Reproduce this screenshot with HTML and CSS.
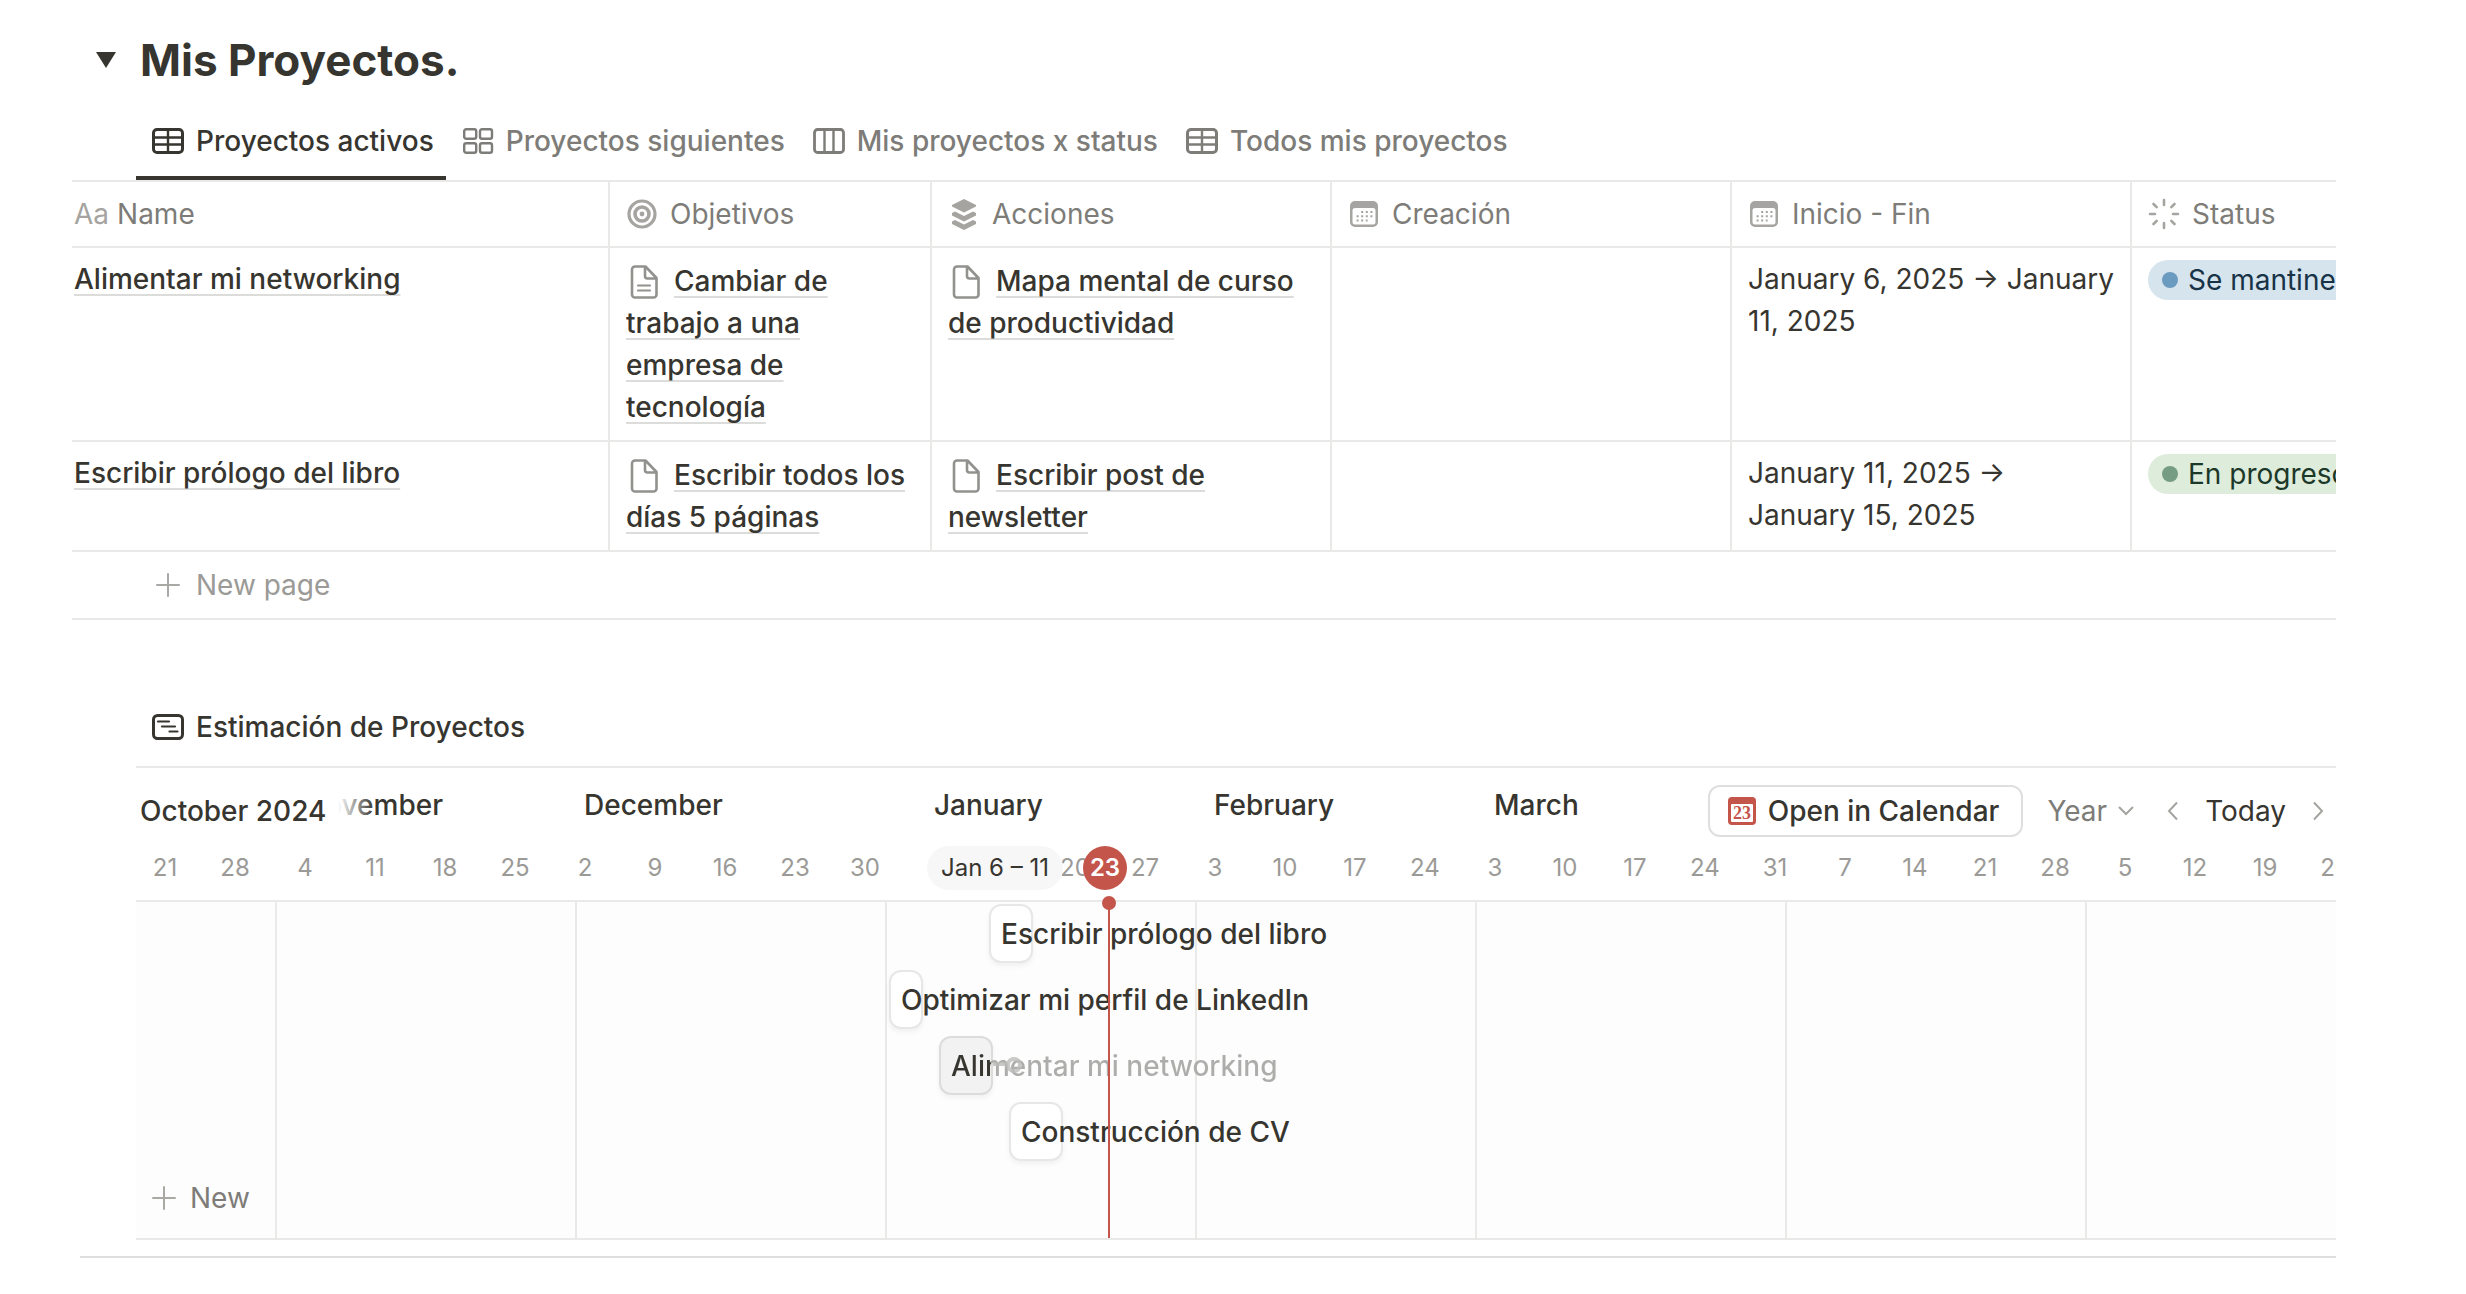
FILE: index.html
```html
<!DOCTYPE html>
<html lang="es">
<head>
<meta charset="utf-8">
<meta name="viewport" content="width=device-width, initial-scale=1">
<title>Mis Proyectos</title>
<link rel="stylesheet" href="styles.css">
</head>
<body>
<svg class="sprite" aria-hidden="true">
  <symbol id="i-table" viewBox="0 0 32 26"><path fill="none" stroke="currentColor" stroke-width="3" d="M5 1.5h22a3.5 3.5 0 0 1 3.5 3.5v16a3.5 3.5 0 0 1-3.500 3.500H5A3.500 3.500 0 0 1 1.500 21V5A3.500 3.500 0 0 1 5 1.500z"/><path fill="none" stroke="currentColor" stroke-width="2.400" d="M2 9.500h28M2 16.500h28M16 2v22"/></symbol>
  <symbol id="i-gallery" viewBox="0 0 32 26"><g fill="none" stroke="currentColor" stroke-width="2.400"><rect x="2.200" y="1.200" width="12" height="9.600" rx="2"/><rect x="18" y="1.200" width="12" height="9.600" rx="2"/><rect x="2.200" y="15.200" width="12" height="9.600" rx="2"/><rect x="18" y="15.200" width="12" height="9.600" rx="2"/></g></symbol>
  <symbol id="i-board" viewBox="0 0 32 26"><rect x="1.500" y="1.500" width="29" height="23" rx="3" fill="none" stroke="currentColor" stroke-width="2.800"/><path stroke="currentColor" stroke-width="2.400" d="M11.500 2v22M20.500 2v22"/></symbol>
  <symbol id="i-timeline" viewBox="0 0 32 26"><rect x="1.500" y="1.500" width="29" height="23" rx="4" fill="none" stroke="currentColor" stroke-width="3"/><path stroke="currentColor" stroke-width="2.200" stroke-linecap="round" d="M6 7.500h11M10 12.500h13M17.500 17.500h8"/></symbol>
  <symbol id="i-target" viewBox="0 0 30 30"><g fill="none" stroke="currentColor"><circle cx="15" cy="15" r="13" stroke-width="3.200"/><circle cx="15" cy="15" r="7" stroke-width="3.600"/></g><circle cx="15" cy="15" r="2.400" fill="currentColor"/></symbol>
  <symbol id="i-layers" viewBox="0 0 26 32"><g fill="currentColor"><path d="M13 1L25 7v1.500L13 14.500 1 8.500V7z"/><path d="M1 15l3-1.500 9 4.500 9-4.500 3 1.500v2.500l-12 6-12-6z"/><path d="M1 23.500l3-1.500 9 4.500 9-4.500 3 1.500v2.500l-12 6-12-6z"/></g></symbol>
  <symbol id="i-date" viewBox="0 0 28 26"><path fill="currentColor" fill-rule="evenodd" d="M5 0h18a5 5 0 0 1 5 5v16a5 5 0 0 1-5 5H5a5 5 0 0 1-5-5V5a5 5 0 0 1 5-5zM2.500 9.500V21A2.500 2.500 0 0 0 5 23.500h18a2.500 2.500 0 0 0 2.500-2.500V9.500A2.500 2.500 0 0 0 23 7H5a2.500 2.500 0 0 0-2.500 2.500z"/><path stroke="currentColor" stroke-width="2" stroke-dasharray="2 2.600" d="M11.200 11h12M6.600 15.200h16M6.600 19.400h11"/></symbol>
  <symbol id="i-status" viewBox="0 0 32 32"><path stroke="currentColor" stroke-width="2.600" stroke-linecap="round" d="M16 2v5M16 25v5M2 16h5M25 16h5M5.500 6l3.200 3.200M26.500 6l-3.200 3.200M5.500 26l3.200-3.200M26.500 26l-3.200-3.200"/></symbol>
  <symbol id="i-page" viewBox="0 0 28 34"><path fill="none" stroke="currentColor" stroke-width="2.600" stroke-linejoin="round" d="M5 1.500h10.500L26.500 13v16.500a3 3 0 0 1-3 3H5a3 3 0 0 1-3-3v-25a3 3 0 0 1 3-3zM15 2v9a2.500 2.500 0 0 0 2.500 2.500H26"/></symbol>
  <symbol id="i-page-text" viewBox="0 0 28 34"><use href="#i-page"/><path stroke="currentColor" stroke-width="2.200" stroke-linecap="round" d="M8 20.500h12M8 25.500h12"/></symbol>
  <symbol id="i-plus" viewBox="0 0 24 24"><path stroke="currentColor" stroke-width="2" stroke-linecap="round" d="M12 1v22M1 12h22"/></symbol>
</svg>

<main class="page">
  <h1 class="title">
    <button class="toggle" aria-label="Contraer"><svg viewBox="0 0 20 16"><path fill="currentColor" d="M0 0h20L10 16z"/></svg></button>
    Mis Proyectos.
  </h1>

  <nav class="tabs">
    <button class="tab active"><svg><use href="#i-table"/></svg>Proyectos activos</button>
    <button class="tab"><svg><use href="#i-gallery"/></svg>Proyectos siguientes</button>
    <button class="tab"><svg><use href="#i-board"/></svg>Mis proyectos x status</button>
    <button class="tab"><svg><use href="#i-table"/></svg>Todos mis proyectos</button>
  </nav>

  <section class="database">
    <table class="grid">
      <colgroup><col class="c-name"><col class="c-goal"><col class="c-wide"><col class="c-wide"><col class="c-wide"><col class="c-wide"></colgroup>
      <thead>
        <tr>
          <th><span class="head name"><span class="aa">Aa</span>Name</span></th>
          <th><span class="head"><svg class="ic-target"><use href="#i-target"/></svg>Objetivos</span></th>
          <th><span class="head"><svg class="ic-layers"><use href="#i-layers"/></svg>Acciones</span></th>
          <th><span class="head"><svg class="ic-date"><use href="#i-date"/></svg>Creación</span></th>
          <th><span class="head"><svg class="ic-date"><use href="#i-date"/></svg>Inicio - Fin</span></th>
          <th><span class="head"><svg class="ic-status"><use href="#i-status"/></svg>Status</span></th>
        </tr>
      </thead>
      <tbody>
        <tr>
          <td><a class="link" href="#">Alimentar mi networking</a></td>
          <td class="relation"><svg class="ic-page"><use href="#i-page-text"/></svg><a class="link" href="#">Cambiar de trabajo a una empresa de tecnología</a></td>
          <td class="relation"><svg class="ic-page"><use href="#i-page"/></svg><a class="link" href="#">Mapa mental de curso de productividad</a></td>
          <td></td>
          <td class="dates">January 6, 2025 → January 11, 2025</td>
          <td class="status"><span class="pill blue">Se mantinene</span></td>
        </tr>
        <tr>
          <td><a class="link" href="#">Escribir prólogo del libro</a></td>
          <td class="relation"><svg class="ic-page"><use href="#i-page"/></svg><a class="link" href="#">Escribir todos los días 5 páginas</a></td>
          <td class="relation"><svg class="ic-page"><use href="#i-page"/></svg><a class="link" href="#">Escribir post de newsletter</a></td>
          <td></td>
          <td class="dates">January 11, 2025 → <span class="keep">January 15, 2025</span></td>
          <td class="status"><span class="pill green">En progreso</span></td>
        </tr>
      </tbody>
    </table>
    <button class="new-page"><svg class="ic-plus"><use href="#i-plus"/></svg>New page</button>
  </section>

  <section class="estimate">
    <h2 class="view-name"><svg><use href="#i-timeline"/></svg>Estimación de Proyectos</h2>
    <div class="timeline">
      <header class="scale">
        <div class="months">
          <span class="w-lead"></span>
          <span class="w4">November</span>
          <span class="w5">December</span>
          <span class="w4">January</span>
          <span class="w4">February</span>
          <span class="w5">March</span>
        </div>
        <div class="sticky-month">October 2024</div>
        <div class="controls">
          <button class="open"><svg viewBox="0 0 28 28"><rect width="28" height="28" rx="4" fill="#c4554a"/><rect x="3" y="7" width="22" height="18" rx="1" fill="#fff"/><text x="14" y="22" text-anchor="middle" class="cal-num">23</text></svg>Open in Calendar</button>
          <button class="year">Year<svg viewBox="0 0 18 12"><path d="M2 2l7 7 7-7"/></svg></button>
          <button class="arrow" aria-label="Anterior"><svg viewBox="0 0 12 20"><path d="M10 1.500L2 10l8 8.500"/></svg></button>
          <button class="today">Today</button>
          <button class="arrow" aria-label="Siguiente"><svg viewBox="0 0 12 20"><path d="M2 1.500L10 10l-8 8.500"/></svg></button>
        </div>
        <div class="weeks">
          <span>21</span><span>28</span><span>4</span><span>11</span><span>18</span><span>25</span><span>2</span><span>9</span><span>16</span><span>23</span><span>30</span><span></span><span></span><span>20</span><span>27</span><span>3</span><span>10</span><span>17</span><span>24</span><span>3</span><span>10</span><span>17</span><span>24</span><span>31</span><span>7</span><span>14</span><span>21</span><span>28</span><span>5</span><span>12</span><span>19</span><span>26</span>
          <span class="range">Jan 6 – 11</span>
          <span class="now">23</span>
        </div>
      </header>
      <div class="canvas">
        <div class="stripes"><i class="lead"></i><i class="d30"></i><i class="d31"></i><i class="d31"></i><i class="d28"></i><i class="d31"></i><i class="d30"></i></div>
        <div class="row"><div class="bar" style="left:853px;width:44px">Escribir prólogo del libro</div></div>
        <div class="row"><div class="bar" style="left:753px;width:34px">Optimizar mi perfil de LinkedIn</div></div>
        <div class="row"><div class="bar hover" style="left:803px;width:54px"><span class="fade">Alimentar mi networking</span><svg class="knob" viewBox="0 0 32 16"><path d="M0 7h16"/><circle cx="21" cy="8" r="6"/></svg></div></div>
        <div class="row"><div class="bar" style="left:873px;width:54px">Construcción de CV</div></div>
        <button class="new"><svg class="ic-plus"><use href="#i-plus"/></svg>New</button>
        <div class="now-line"></div>
      </div>
    </div>
  </section>
  <hr class="rule">
</main>
</body>
</html>
```
FILE: styles.css
```css
* { box-sizing: border-box; }
body {
  margin: 0;
  background: #fff;
  color: #37352f;
  font: 400 28px/42px Inter, "Liberation Sans", sans-serif;
}
button {
  margin: 0;
  padding: 0;
  border: 0;
  background: none;
  color: inherit;
  font: inherit;
  white-space: nowrap;
}
svg { display: block; flex: none; }
.sprite { position: absolute; width: 0; height: 0; }
.page { padding: 30px 130px 36px 72px; }

.title {
  display: flex;
  align-items: center;
  gap: 24px;
  margin: 0 0 16px;
  padding-left: 24px;
  font-size: 44px;
  line-height: 60px;
  font-weight: 700;
}
.toggle svg { width: 20px; height: 16px; }

.tabs {
  display: flex;
  margin-left: 64px;
  font-weight: 500;
  color: #7d7c78;
}
.tab {
  display: flex;
  align-items: center;
  gap: 12px;
  height: 74px;
  padding: 0 12px 4px 16px;
}
.tab svg, .view-name svg { width: 32px; height: 26px; }
.tab.active { color: #37352f; border-bottom: 4px solid #37352f; padding-bottom: 0; }

.database { border-top: 2px solid #e9e9e7; border-bottom: 2px solid #e9e9e7; overflow: hidden; }
.grid { table-layout: fixed; width: 2458px; border-collapse: separate; border-spacing: 0; }
.c-name { width: 536px; }
.c-goal { width: 322px; }
.c-wide { width: 400px; }
th, td {
  border-bottom: 2px solid #e9e9e7;
  border-left: 2px solid #e9e9e7;
  padding: 10px 16px 12px;
  text-align: left;
  vertical-align: top;
}
th { padding: 11px 16px; font-weight: 400; color: #7d7c78; }
th:first-child, td:first-child { border-left: 0; padding-left: 2px; }
.head { display: flex; align-items: center; gap: 12px; height: 42px; }
.head.name { gap: 8px; }
.head svg, .aa { color: #a5a4a0; }
.ic-target { width: 32px; height: 30px; }
.ic-layers { width: 32px; height: 32px; }
.ic-date { width: 32px; height: 26px; }
.ic-status { width: 32px; height: 32px; }
.link {
  color: inherit;
  font-weight: 500;
  text-decoration: underline #dcdcda 2px;
  text-underline-offset: 5px;
  text-decoration-skip-ink: none;
}
td.relation { padding-top: 12px; }
td.dates { padding-right: 12px; }
.keep { white-space: nowrap; }
.ic-page { display: inline-block; width: 36px; height: 34px; margin-right: 12px; vertical-align: -8px; color: #91918e; }
td.status { padding-top: 12px; }
.pill {
  display: flex;
  align-items: center;
  gap: 10px;
  width: max-content;
  height: 40px;
  padding: 0 18px 0 14px;
  border-radius: 20px;
}
.pill::before { content: ""; width: 16px; height: 16px; border-radius: 50%; }
.blue { background: #d6e4ee; color: #183347; }
.blue::before { background: #6c9bc0; }
.green { background: #deecdc; color: #1c3829; }
.green::before { background: #779c84; }
.new-page {
  display: flex;
  align-items: center;
  gap: 16px;
  width: 100%;
  height: 66px;
  padding-left: 84px;
  color: #9b9a97;
}
.ic-plus { width: 24px; height: 24px; color: #a9a8a4; }

.estimate { margin: 76px 0 16px 64px; }
.view-name {
  display: flex;
  align-items: center;
  gap: 12px;
  margin: 0;
  height: 70px;
  padding: 0 16px 8px;
  font-size: 28px;
  font-weight: 500;
}
.timeline { border-top: 2px solid #e9e9e7; border-bottom: 2px solid #e9e9e7; overflow: hidden; }
.scale { position: relative; height: 134px; padding-top: 16px; border-bottom: 2px solid #e9e9e7; }
.months { display: flex; font-weight: 500; }
.months span { flex: none; }
.w-lead { width: 168px; }
.w4 { width: 280px; }
.w5 { width: 350px; }
.sticky-month {
  position: absolute;
  left: 0;
  top: 22px;
  padding: 0 48px 0 4px;
  font-weight: 500;
  background: linear-gradient(to left, #fff0, #fff 36px);
}
.controls {
  position: absolute;
  right: 0;
  top: 17px;
  display: flex;
  align-items: center;
  padding-right: 12px;
  background: #fff;
}
.open {
  display: flex;
  align-items: center;
  gap: 12px;
  height: 52px;
  padding: 0 22px 0 18px;
  border: 2px solid #dfdfde;
  border-radius: 12px;
  font-weight: 500;
}
.open svg { width: 28px; height: 28px; }
.cal-num { font: 700 18px "Liberation Serif", serif; fill: #c4554a; }
.year { display: flex; align-items: center; gap: 10px; margin-left: 24px; color: #7d7c78; }
.year svg { width: 18px; height: 12px; }
.controls path { fill: none; stroke: #a5a4a0; stroke-width: 2; }
.arrow { margin-left: 32px; }
.arrow svg { width: 12px; height: 20px; }
.today { margin-left: 26px; }
.today + .arrow { margin-left: 26px; }
.weeks {
  position: relative;
  display: flex;
  margin: 20px 0 0 -6px;
  color: #9b9a97;
  font-size: 24px;
  line-height: 44px;
}
.weeks span { flex: none; width: 70px; text-align: center; }
.weeks .range, .weeks .now { position: absolute; top: 0; height: 44px; border-radius: 22px; }
.weeks .range { left: 797px; width: 136px; background: #f7f7f7; color: #37352f; }
.weeks .now { left: 953px; width: 44px; background: #c4554a; color: #fff; font-weight: 600; }

.canvas { position: relative; padding-top: 2px; background: #fdfdfd; }
.stripes { position: absolute; inset: 0; display: flex; }
.stripes i { flex: none; border-right: 2px solid #e9e9e7; }
.lead { width: 141px; }
.d28 { width: 280px; }
.d30 { width: 300px; }
.d31 { width: 310px; }
.row { position: relative; height: 66px; }
.bar {
  position: absolute;
  top: 0;
  height: 59px;
  padding-left: 10px;
  border: 2px solid #e7e7e6;
  border-radius: 12px;
  background: #fff;
  box-shadow: 0 3px 5px #0000000d;
  font-weight: 500;
  line-height: 56px;
  white-space: nowrap;
}
.bar.hover { background: #f2f2f2; border-color: #dcdcdb; }
.fade {
  background: linear-gradient(90deg, #37352f 40px, #adadab 40px);
  background-clip: text;
  -webkit-background-clip: text;
  color: transparent;
}
.knob { position: absolute; left: 52px; top: 19px; width: 32px; height: 16px; fill: none; stroke: #bdbdbb; stroke-width: 4; opacity: .8; }
.new {
  position: relative;
  display: flex;
  align-items: center;
  gap: 14px;
  height: 70px;
  padding: 0 16px 10px;
  color: #7d7c78;
}
.now-line { position: absolute; left: 972px; top: 0; bottom: 0; width: 2px; background: #c4554a; }
.now-line::before {
  content: "";
  position: absolute;
  left: -6px;
  top: -6px;
  width: 14px;
  height: 14px;
  border-radius: 50%;
  background: #c4554a;
}
.rule { margin: 0 0 0 8px; border: 0; border-top: 2px solid #dfdfde; }
```
